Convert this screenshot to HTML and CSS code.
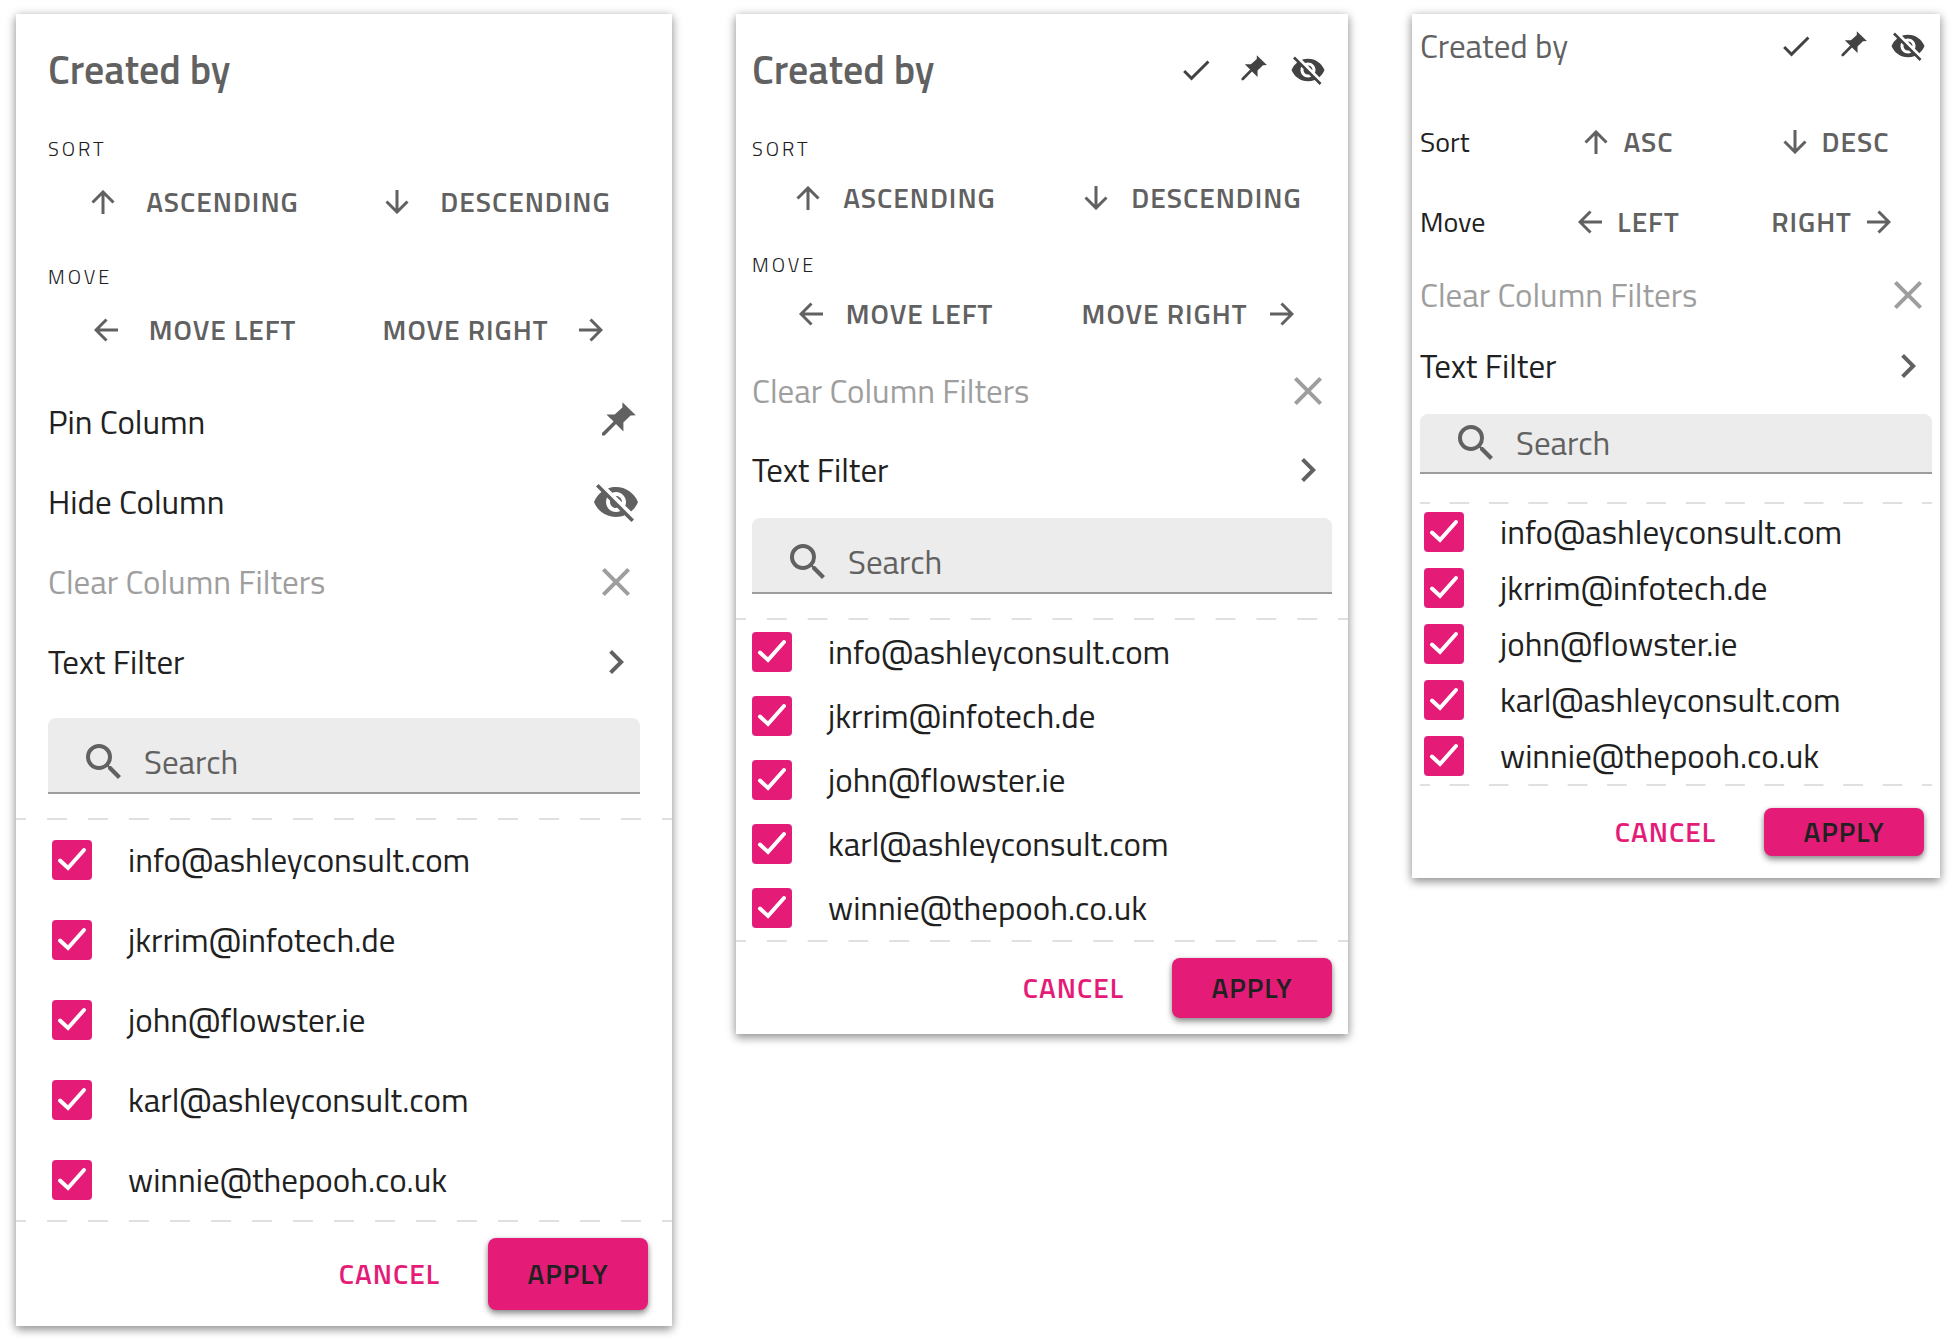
FILE: index.html
```html
<!DOCTYPE html>
<html lang="en">
<head>
<meta charset="utf-8">
<title>Column filter menus</title>
<link rel="stylesheet" href="styles.css">
</head>
<body>
<svg class="sprite" aria-hidden="true">
  <symbol id="up" viewBox="0 0 24 24"><path d="M12 24V2M1.500 12.500 12 2l10.500 10.500"/></symbol>
  <symbol id="down" viewBox="0 0 24 24"><path d="M12 0v22M1.500 11.500 12 22l10.500-10.500"/></symbol>
  <symbol id="left" viewBox="0 0 24 24"><path d="M24 12H2M12.500 1.500 2 12l10.500 10.500"/></symbol>
  <symbol id="right" viewBox="0 0 24 24"><path d="M0 12h22M11.500 1.500 22 12 11.500 22.500"/></symbol>
  <symbol id="close" viewBox="0 0 24 24"><path d="M19 6.410 17.590 5 12 10.590 6.410 5 5 6.410 10.590 12 5 17.590 6.410 19 12 13.410 17.590 19 19 17.590 13.410 12z"/></symbol>
  <symbol id="chevron" viewBox="0 0 24 24"><path d="M10 6 8.590 7.410 13.170 12l-4.580 4.590L10 18l6-6z"/></symbol>
  <symbol id="check" viewBox="0 0 24 24"><path d="M9 16.170 4.830 12l-1.420 1.410L9 19 21 7l-1.410-1.410z"/></symbol>
  <symbol id="search" viewBox="0 0 24 24"><path d="M15.500 14h-.79l-.28-.27A6.471 6.471 0 0 0 16 9.500 6.500 6.500 0 1 0 9.500 16c1.610 0 3.090-.59 4.230-1.570l.27.28v.79l5 4.990L20.490 19l-4.990-5zm-6 0C7.010 14 5 11.990 5 9.500S7.010 5 9.500 5 14 7.010 14 9.500 11.990 14 9.500 14z"/></symbol>
  <symbol id="pin" viewBox="0 0 24 24"><path d="M15.200 2.100 21.900 8.600 19.300 8.800 15.700 12.300V16.700L12 13 6.300 18.800H5V17.500L10.800 11.700 7.200 8.200H11.300L15.200 4.700z"/></symbol>
  <symbol id="eye" viewBox="0 0 24 24"><path d="M12 7c2.760 0 5 2.240 5 5 0 .65-.13 1.260-.36 1.830l2.920 2.920c1.510-1.260 2.700-2.890 3.430-4.750-1.730-4.390-6-7.500-11-7.500-1.400 0-2.740.25-3.980.7l2.160 2.160C10.740 7.130 11.350 7 12 7zM2 4.270l2.280 2.280.46.46A11.804 11.804 0 0 0 1 12c1.730 4.390 6 7.500 11 7.500 1.550 0 3.030-.3 4.380-.84l.42.42L19.730 22 21 20.730 3.270 3 2 4.270zM7.530 9.800l1.550 1.550c-.05.21-.08.43-.08.65 0 1.660 1.340 3 3 3 .22 0 .44-.03.65-.08l1.550 1.550c-.67.33-1.410.53-2.200.53-2.760 0-5-2.240-5-5 0-.79.2-1.530.53-2.200zm4.310-.78 3.150 3.150.02-.16c0-1.660-1.340-3-3-3l-.17.01z"/></symbol>
</svg>

<main class="board">
  <section class="menu menu--comfortable">
    <header class="menu__header"><h2 class="menu__title">Created by</h2></header>
    <div class="actions">
      <h3 class="actions__label">Sort</h3>
      <button class="action" type="button"><svg class="arrow"><use href="#up"/></svg>ASCENDING</button>
      <button class="action action--down" type="button"><svg class="arrow"><use href="#down"/></svg>DESCENDING</button>
    </div>
    <div class="actions">
      <h3 class="actions__label">Move</h3>
      <button class="action" type="button"><svg class="arrow"><use href="#left"/></svg>MOVE LEFT</button>
      <button class="action" type="button">MOVE RIGHT<svg class="arrow"><use href="#right"/></svg></button>
    </div>
    <div class="rows">
      <button class="row" type="button">Pin Column<svg class="icon"><use href="#pin"/></svg></button>
      <button class="row" type="button">Hide Column<svg class="icon"><use href="#eye"/></svg></button>
      <button class="row" type="button" disabled>Clear Column Filters<svg class="icon"><use href="#close"/></svg></button>
      <button class="row" type="button">Text Filter<svg class="icon"><use href="#chevron"/></svg></button>
    </div>
    <label class="search"><svg class="icon"><use href="#search"/></svg><input class="search__input" type="text" placeholder="Search" aria-label="Search"></label>
    <div class="list">
      <label class="item"><input class="box" type="checkbox" checked>info@ashleyconsult.com</label>
      <label class="item"><input class="box" type="checkbox" checked>jkrrim@infotech.de</label>
      <label class="item"><input class="box" type="checkbox" checked>john@flowster.ie</label>
      <label class="item"><input class="box" type="checkbox" checked>karl@ashleyconsult.com</label>
      <label class="item"><input class="box" type="checkbox" checked>winnie@thepooh.co.uk</label>
    </div>
    <footer class="menu__footer">
      <button class="btn" type="button">CANCEL</button>
      <button class="btn btn--primary" type="button">APPLY</button>
    </footer>
  </section>

  <section class="menu menu--cosy">
    <header class="menu__header">
      <h2 class="menu__title">Created by</h2>
      <div class="tools">
        <button class="tool" type="button" aria-label="Select"><svg class="icon"><use href="#check"/></svg></button>
        <button class="tool" type="button" aria-label="Pin column"><svg class="icon"><use href="#pin"/></svg></button>
        <button class="tool" type="button" aria-label="Hide column"><svg class="icon"><use href="#eye"/></svg></button>
      </div>
    </header>
    <div class="actions">
      <h3 class="actions__label">Sort</h3>
      <button class="action" type="button"><svg class="arrow"><use href="#up"/></svg>ASCENDING</button>
      <button class="action action--down" type="button"><svg class="arrow"><use href="#down"/></svg>DESCENDING</button>
    </div>
    <div class="actions">
      <h3 class="actions__label">Move</h3>
      <button class="action" type="button"><svg class="arrow"><use href="#left"/></svg>MOVE LEFT</button>
      <button class="action" type="button">MOVE RIGHT<svg class="arrow"><use href="#right"/></svg></button>
    </div>
    <div class="rows">
      <button class="row" type="button" disabled>Clear Column Filters<svg class="icon"><use href="#close"/></svg></button>
      <button class="row" type="button">Text Filter<svg class="icon"><use href="#chevron"/></svg></button>
    </div>
    <label class="search"><svg class="icon"><use href="#search"/></svg><input class="search__input" type="text" placeholder="Search" aria-label="Search"></label>
    <div class="list">
      <label class="item"><input class="box" type="checkbox" checked>info@ashleyconsult.com</label>
      <label class="item"><input class="box" type="checkbox" checked>jkrrim@infotech.de</label>
      <label class="item"><input class="box" type="checkbox" checked>john@flowster.ie</label>
      <label class="item"><input class="box" type="checkbox" checked>karl@ashleyconsult.com</label>
      <label class="item"><input class="box" type="checkbox" checked>winnie@thepooh.co.uk</label>
    </div>
    <footer class="menu__footer">
      <button class="btn" type="button">CANCEL</button>
      <button class="btn btn--primary" type="button">APPLY</button>
    </footer>
  </section>

  <section class="menu menu--compact">
    <header class="menu__header">
      <h2 class="menu__title">Created by</h2>
      <div class="tools">
        <button class="tool" type="button" aria-label="Select"><svg class="icon"><use href="#check"/></svg></button>
        <button class="tool" type="button" aria-label="Pin column"><svg class="icon"><use href="#pin"/></svg></button>
        <button class="tool" type="button" aria-label="Hide column"><svg class="icon"><use href="#eye"/></svg></button>
      </div>
    </header>
    <div class="actions">
      <h3 class="actions__label">Sort</h3>
      <button class="action" type="button"><svg class="arrow"><use href="#up"/></svg>ASC</button>
      <button class="action action--down" type="button"><svg class="arrow"><use href="#down"/></svg>DESC</button>
    </div>
    <div class="actions">
      <h3 class="actions__label">Move</h3>
      <button class="action" type="button"><svg class="arrow"><use href="#left"/></svg>LEFT</button>
      <button class="action" type="button">RIGHT<svg class="arrow"><use href="#right"/></svg></button>
    </div>
    <div class="rows">
      <button class="row" type="button" disabled>Clear Column Filters<svg class="icon"><use href="#close"/></svg></button>
      <button class="row" type="button">Text Filter<svg class="icon"><use href="#chevron"/></svg></button>
    </div>
    <label class="search"><svg class="icon"><use href="#search"/></svg><input class="search__input" type="text" placeholder="Search" aria-label="Search"></label>
    <div class="list">
      <label class="item"><input class="box" type="checkbox" checked>info@ashleyconsult.com</label>
      <label class="item"><input class="box" type="checkbox" checked>jkrrim@infotech.de</label>
      <label class="item"><input class="box" type="checkbox" checked>john@flowster.ie</label>
      <label class="item"><input class="box" type="checkbox" checked>karl@ashleyconsult.com</label>
      <label class="item"><input class="box" type="checkbox" checked>winnie@thepooh.co.uk</label>
    </div>
    <footer class="menu__footer">
      <button class="btn" type="button">CANCEL</button>
      <button class="btn btn--primary" type="button">APPLY</button>
    </footer>
  </section>
</main>
</body>
</html>
```
FILE: styles.css
```css
* { box-sizing: border-box; }

body {
  margin: 0;
  background: #fff;
  color: #212121;
  font: 400 33px/40px "Titillium Web", Roboto, "Liberation Sans", sans-serif;
}

button {
  padding: 0;
  border: 0;
  background: none;
  color: inherit;
  font: inherit;
}

.sprite { display: none; }

.board {
  display: grid;
  grid-template-columns: 656fr 612fr 528fr;
  align-items: start;
  gap: 64px;
  padding: 14px 16px 18px;
}

.menu {
  background: #fff;
  box-shadow: 0 2px 10px rgba(0, 0, 0, .3), 0 4px 8px rgba(0, 0, 0, .22);
}

.menu--comfortable {
  --pad: 32px;
  --action-h: 82px;
  --action-gap: 31px;
  --section-gap: 22px;
  --row-h: 80px;
  --item-h: 80px;
  --search-h: 76px;
  --search-top: 14px;
  --btn-h: 72px;
  --foot: 16px;
}

.menu--cosy {
  --pad: 16px;
  --action-h: 74px;
  --action-gap: 23px;
  --section-gap: 18px;
  --row-h: 79px;
  --item-h: 64px;
  --search-h: 76px;
  --search-top: 14px;
  --btn-h: 60px;
  --foot: 16px;
}

.menu--compact {
  --pad: 8px;
  --action-h: 74px;
  --action-gap: 15px;
  --section-gap: 6px;
  --row-h: 71px;
  --item-h: 56px;
  --search-h: 60px;
  --search-top: 0px;
  --btn-h: 48px;
  --foot: 22px;
}

.menu__header {
  display: flex;
  align-items: center;
  justify-content: space-between;
  padding: 32px var(--pad) 43px;
  color: #616161;
}

.menu--compact .menu__header { padding: 8px var(--pad) 35px; }

.menu__title {
  margin: 0;
  font-size: 40px;
  font-weight: 600;
  line-height: 48px;
}

.menu--compact .menu__title {
  font-size: 33px;
  font-weight: 400;
}

.tools {
  display: flex;
  gap: 20px;
  padding-right: 6px;
  color: #424242;
}

.tool { display: flex; }

.icon {
  flex: none;
  width: 48px;
  height: 48px;
  fill: currentColor;
}

.tool .icon {
  width: 36px;
  height: 36px;
}

/* Sort and move actions */
.actions {
  display: grid;
  grid-template-columns: 1fr 1fr;
  column-gap: 4px;
  padding: 0 var(--pad);
}

.actions + .actions { margin-top: var(--section-gap); }

.actions__label {
  grid-column: 1 / -1;
  margin: 0;
  font-size: 20px;
  font-weight: 300;
  line-height: 24px;
  letter-spacing: 3px;
  text-transform: uppercase;
}

.menu--compact .actions {
  grid-template-columns: 108px 1fr 1fr;
  column-gap: 0;
  align-items: center;
}

.menu--compact .actions__label {
  grid-column: auto;
  font-size: 28px;
  font-weight: 400;
  letter-spacing: 0;
  text-transform: none;
}

.action {
  display: flex;
  align-items: center;
  justify-content: center;
  gap: var(--action-gap);
  height: var(--action-h);
  color: #616161;
  font-size: 28px;
  font-weight: 600;
  letter-spacing: 1px;
}

.action--down { padding-left: 10px; }

.arrow {
  flex: none;
  width: 24px;
  height: 24px;
  fill: none;
  stroke: currentColor;
  stroke-width: 3;
}

/* Menu rows */
.rows { padding: 0 var(--pad) 2px; }

.menu--comfortable .rows { padding: 11px var(--pad) 9px; }

.menu--compact .rows { padding-bottom: 6px; }

.row {
  display: flex;
  align-items: center;
  justify-content: space-between;
  width: 100%;
  height: var(--row-h);
  text-align: left;
}

.row .icon { color: #616161; }

.row:disabled,
.row:disabled .icon { color: #9e9e9e; }

.search {
  display: flex;
  align-items: center;
  gap: 16px;
  height: var(--search-h);
  margin: 7px var(--pad) 24px;
  padding: var(--search-top) 16px 0 32px;
  border-bottom: 2px solid #9e9e9e;
  border-radius: 8px 8px 0 0;
  background: #ececec;
  color: #616161;
}

.menu--compact .search { margin-bottom: 28px; }

.search__input {
  flex: 1;
  min-width: 0;
  padding: 0;
  border: 0;
  outline: 0;
  background: none;
  color: inherit;
  font: inherit;
}

.search__input::placeholder {
  color: #616161;
  opacity: 1;
}

/* Value list between two dashed rules */
.list {
  --dash: linear-gradient(90deg, #e0e0e0 25%, transparent 25% 75%, #e0e0e0 75%);
  padding: 2px 36px;
  background: var(--dash) 0 0 / 40px 2px round no-repeat, var(--dash) 0 100% / 40px 2px round no-repeat;
}

.menu--cosy .list { padding: 2px 16px; }

.menu--compact .list {
  margin: 0 8px;
  padding: 2px 4px;
}

.item {
  display: flex;
  align-items: center;
  gap: 36px;
  height: var(--item-h);
}

.box {
  flex: none;
  width: 40px;
  height: 40px;
  margin: 0;
  border: 2px solid #616161;
  border-radius: 4px;
  appearance: none;
}

.box:checked {
  border: 0;
  background: #e41c77 url("data:image/svg+xml,%3Csvg xmlns='http://www.w3.org/2000/svg' viewBox='0 0 40 40'%3E%3Cpath d='M8 20.500 16 28 32 10' fill='none' stroke='white' stroke-width='4' stroke-linecap='round'/%3E%3C/svg%3E");
}

.menu__footer {
  display: flex;
  justify-content: flex-end;
  gap: 16px;
  padding: var(--foot) 24px;
}

.menu--cosy .menu__footer,
.menu--compact .menu__footer { padding-right: 16px; }

.btn {
  min-width: 160px;
  height: var(--btn-h);
  padding: 0 32px;
  border-radius: 8px;
  color: #e41c77;
  font-size: 28px;
  font-weight: 600;
  letter-spacing: 1px;
}

.btn--primary {
  background: #e41c77;
  box-shadow: 0 4px 6px rgba(0, 0, 0, .35), 0 1px 5px rgba(0, 0, 0, .2);
  color: #212121;
}
```
